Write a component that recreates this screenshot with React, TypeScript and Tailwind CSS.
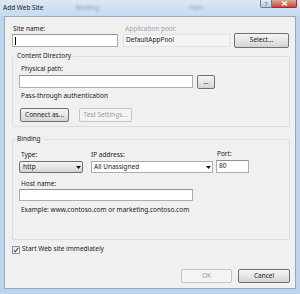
import React from "react";

const font = { fontFamily: '"Noto Sans", "Open Sans", sans-serif' };

function Btn({ w, label, disabled, h = "h-[14px]" }: { w: string; label: string; disabled?: boolean; h?: string }) {
  return (
    <div
      className={`${w} ${h} flex items-center justify-center rounded-[2px] border text-[6.5px] leading-none ${
        disabled
          ? "border-[#c2c6ca] bg-[#f4f4f4] text-[#9a9a9a]"
          : "border-[#707070] bg-gradient-to-b from-[#f4f4f4] via-[#e6e6e6] to-[#d3d3d3] text-[#1a1a1a]"
      }`}
    >
      {label}
    </div>
  );
}

function Input({ w, h = "h-[13px]", children }: { w: string; h?: string; children?: React.ReactNode }) {
  return (
    <div className={`${w} ${h} flex items-center border border-[#abadb3] border-t-[#8e949c] bg-white px-[2px] text-[6.5px] leading-none text-[#1a1a1a]`}>
      {children}
    </div>
  );
}

function Arrow() {
  return (
    <svg width="5" height="3" viewBox="0 0 5 3" className="ml-auto mr-[1px]">
      <path d="M0 0H5L2.5 3Z" fill="#111" />
    </svg>
  );
}

export default function App() {
  return (
    <div className="relative h-[294px] w-[300px] overflow-hidden bg-[#bdd4ec] text-[#1a1a1a]" style={font}>
      {/* title bar */}
      <div className="relative flex h-[16px] items-center bg-gradient-to-b from-[#dbe7f4] to-[#c6daf0]">
        <span className="pl-[3px] text-[6.5px] leading-none text-[#1a1a1a]">Add Web Site</span>
        <span className="ml-[32px] text-[6.5px] leading-none text-[#556070] opacity-50 blur-[1px]">Binding</span>
        <span className="ml-[90px] text-[6.5px] leading-none text-[#556070] opacity-50 blur-[1px]">Path</span>
        <div className="ml-auto mr-[3px] flex self-start">
          <div className="flex h-[8px] w-[12px] items-center justify-center rounded-bl-[2px] border border-t-0 border-[#6d7d90] bg-gradient-to-b from-[#e4ecf5] to-[#b9c9dc] text-[6px] leading-none text-[#3b4655]">
            ?
          </div>
          <div className="flex h-[8px] w-[25px] items-center justify-center rounded-br-[2px] border border-l-0 border-t-0 border-[#7a3a30] bg-gradient-to-b from-[#e5a195] to-[#c7453a]">
            <svg width="7" height="5" viewBox="0 0 7 5">
              <path d="M1 0.5L6 4.5M6 0.5L1 4.5" stroke="#fff" strokeWidth="1.4" />
            </svg>
          </div>
        </div>
      </div>

      {/* content */}
      <div className="ml-[4px] h-[273px] w-[292px] border border-[#97a8bb] bg-[#f0f0f0] pl-[7px] pt-[6px]">
        {/* top row */}
        <div className="flex">
          <div className="w-[106px]">
            <div className="h-[11px] pl-px text-[6.5px] leading-[11px]">Site name:</div>
            <Input w="w-[106px]">
              <span className="h-[8px] w-px bg-black" />
            </Input>
          </div>
          <div className="ml-[5px] w-[107px]">
            <div className="h-[11px] pl-[2px] text-[6.5px] leading-[11px] text-[#a3a3a3]">Application pool:</div>
            <div className="flex h-[13px] w-[107px] items-center border border-[#e3e3e3] bg-[#f4f4f4] px-[2px] text-[6.5px] leading-none text-[#1a1a1a]">
              DefaultAppPool
            </div>
          </div>
          <div className="ml-[4px] mt-[10px]">
            <Btn w="w-[55px]" h="h-[15px]" label="Select..." />
          </div>
        </div>

        {/* Content Directory */}
        <fieldset className="mt-[3px] w-[278px] rounded-[2px] border border-[#d5dfe5] pb-[4px]">
          <legend className="ml-[2px] h-[10px] px-[2px] text-[6.5px] leading-[10px]">Content Directory</legend>
          <div className="pl-[6px]">
            <div className="mt-[2px] h-[11px] pl-[2px] text-[6.5px] leading-[11px]">Physical path:</div>
            <div className="mt-[1px] flex items-start">
              <Input w="w-[174px]" />
              <div className="ml-[4px]">
                <Btn w="w-[18px]" label="..." />
              </div>
            </div>
            <div className="mt-[1px] h-[11px] pl-[2px] text-[6.5px] leading-[11px]">Pass-through authentication</div>
            <div className="mt-[7px] flex">
              <div className="ml-[1px]">
                <Btn w="w-[49px]" label="Connect as..." />
              </div>
              <div className="ml-[10px]">
                <Btn w="w-[53px]" label="Test Settings..." disabled />
              </div>
            </div>
          </div>
        </fieldset>

        {/* Binding */}
        <fieldset className="mt-[7px] w-[278px] rounded-[2px] border border-[#d5dfe5] pb-[24px]">
          <legend className="ml-[2px] h-[10px] px-[2px] text-[6.5px] leading-[10px]">Binding</legend>
          <div className="pl-[6px]">
            <div className="mt-[5px] flex h-[11px] text-[6.5px] leading-[11px]">
              <div className="w-[64px] pl-[2px]">Type:</div>
              <div className="ml-[8px] w-[122px]">IP address:</div>
              <div className="ml-[3px] -mt-[1px] pl-px">Port:</div>
            </div>
            <div className="mt-[1px] flex">
              <div className="flex h-[12px] w-[64px] items-center rounded-[2px] border border-[#707070] bg-gradient-to-b from-[#f4f4f4] via-[#e6e6e6] to-[#d3d3d3] pl-[3px] text-[6.5px] leading-none">
                http
                <Arrow />
              </div>
              <div className="ml-[8px] flex h-[12px] w-[122px] items-center border border-[#abadb3] bg-white pl-[2px] text-[6.5px] leading-none">
                All Unassigned
                <Arrow />
              </div>
              <div className="ml-[3px] -mt-[1px]">
                <Input w="w-[33px]">80</Input>
              </div>
            </div>
            <div className="mt-[6px] h-[10px] pl-[2px] text-[6.5px] leading-[10px]">Host name:</div>
            <Input w="w-[174px]" h="h-[12px]" />
            <div className="mt-[3px] h-[11px] pl-[2px] text-[6.5px] leading-[11px]">
              Example: www.contoso.com or marketing.contoso.com
            </div>
          </div>
        </fieldset>

        {/* checkbox */}
        <div className="mt-[4px] flex h-[11px] items-center">
          <div className="flex h-[8px] w-[8px] items-center justify-center border border-[#8e8f8f] bg-gradient-to-b from-[#e8e8e8] to-[#ffffff]">
            <svg width="6" height="6" viewBox="0 0 6 6">
              <path d="M0.8 3.2L2.3 4.8L5.2 0.9" stroke="#3c4e86" strokeWidth="1.1" fill="none" />
            </svg>
          </div>
          <span className="ml-[2px] text-[6.5px] leading-none">Start Web site immediately</span>
        </div>

        {/* buttons */}
        <div className="mt-[14px] flex w-[278px] justify-end gap-[6px]">
          <Btn w="w-[51px]" label="OK" disabled />
          <Btn w="w-[52px]" label="Cancel" />
        </div>
      </div>
    </div>
  );
}
